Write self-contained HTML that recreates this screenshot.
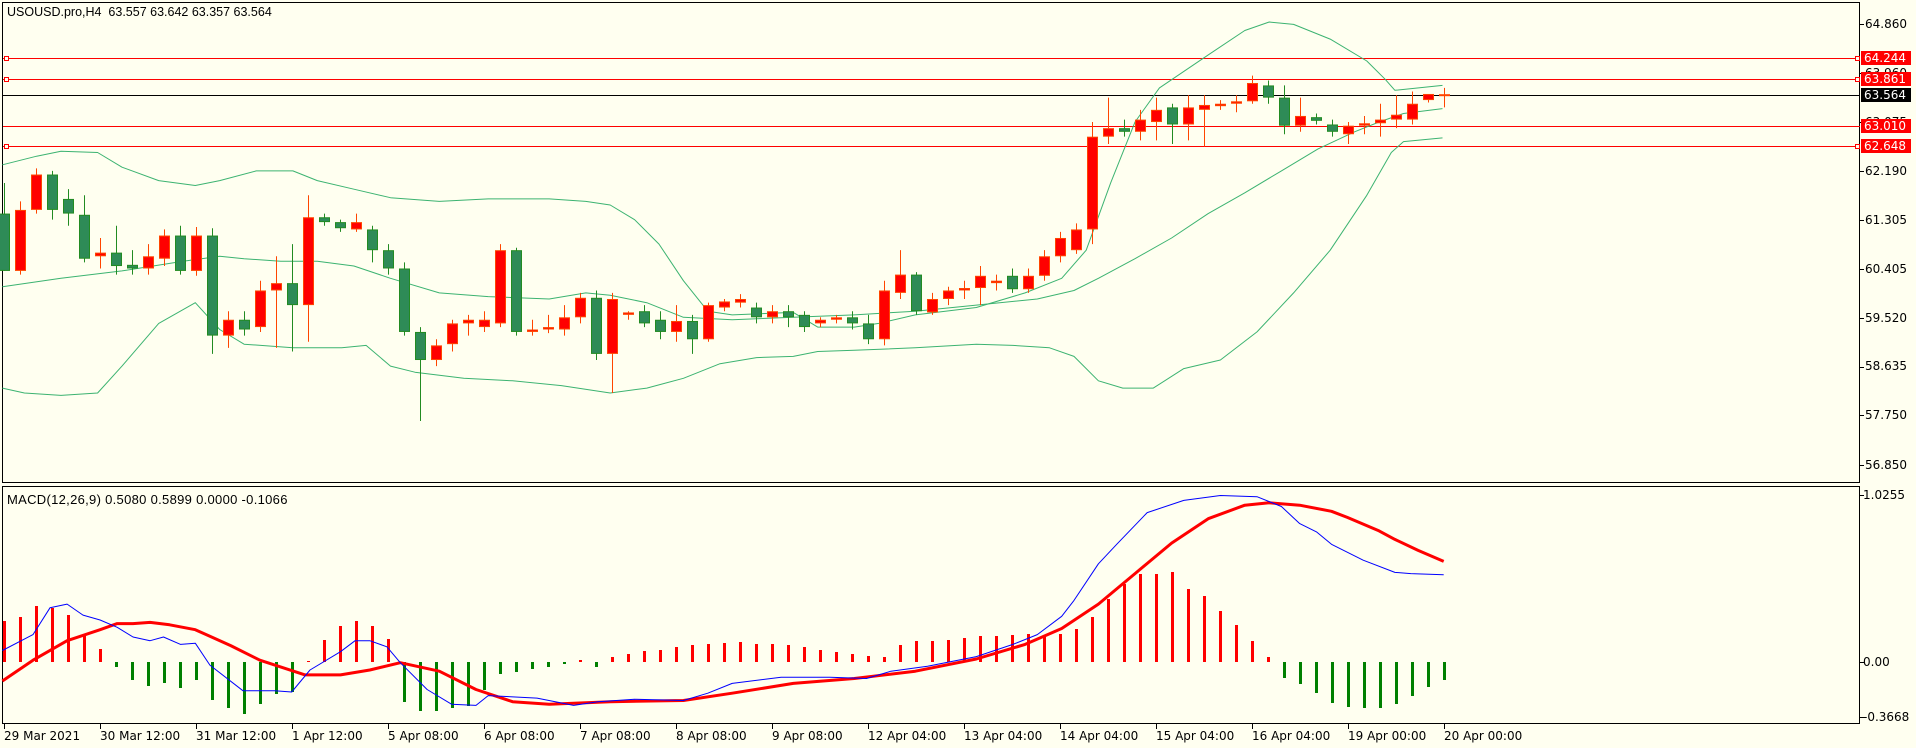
<!DOCTYPE html>
<html><head><meta charset="utf-8">
<style>
html,body{margin:0;padding:0;background:#fffff0;}
body{width:1916px;height:748px;position:relative;overflow:hidden;font-family:"Liberation Sans","DejaVu Sans",sans-serif;font-size:12px;color:#000;}
svg{position:absolute;left:0;top:0;}
.t{position:absolute;white-space:nowrap;line-height:13px;font-size:12.5px;}
.d{position:absolute;white-space:nowrap;line-height:13px;font-size:12px;font-family:"DejaVu Sans",sans-serif;}
.ax{position:absolute;left:1865px;white-space:nowrap;font-size:12px;line-height:13px;font-family:"DejaVu Sans",sans-serif;}
.box{position:absolute;left:1861px;width:50px;height:14px;line-height:14px;color:#fff;font-size:12px;padding-left:3px;box-sizing:border-box;font-family:"DejaVu Sans",sans-serif;}
</style></head><body>
<svg id="c" width="1916" height="748" xmlns="http://www.w3.org/2000/svg"></svg>

<div class="t" style="left:7px;top:6px">USOUSD.pro,H4&nbsp;&nbsp;63.557 63.642 63.357 63.564</div>
<div class="t" style="left:7px;top:493px;font-size:13px;letter-spacing:0.3px">MACD(12,26,9) 0.5080 0.5899 0.0000 -0.1066</div>

<div class="ax" style="top:18px">64.860</div>
<div class="ax" style="top:67px">63.960</div>
<div class="ax" style="top:116px">63.075</div>
<div class="ax" style="top:165px">62.190</div>
<div class="ax" style="top:214px">61.305</div>
<div class="ax" style="top:263px">60.405</div>
<div class="ax" style="top:312px">59.520</div>
<div class="ax" style="top:360px">58.635</div>
<div class="ax" style="top:409px">57.750</div>
<div class="ax" style="top:459px">56.850</div>

<div class="box" style="top:51px;background:#f00">64.244</div>
<div class="box" style="top:72px;background:#f00">63.861</div>
<div class="box" style="top:88px;background:#000">63.564</div>
<div class="box" style="top:119px;background:#f00">63.010</div>
<div class="box" style="top:139px;background:#f00">62.648</div>

<div class="ax" style="top:489px;left:1863px">1.0255</div>
<div class="ax" style="top:656px;left:1863px">0.00</div>
<div class="ax" style="top:711px;left:1863px">-0.3668</div>

<div class="d" style="left:4px;top:730px">29 Mar 2021</div>
<div class="d" style="left:100px;top:730px">30 Mar 12:00</div>
<div class="d" style="left:196px;top:730px">31 Mar 12:00</div>
<div class="d" style="left:292px;top:730px">1 Apr 12:00</div>
<div class="d" style="left:388px;top:730px">5 Apr 08:00</div>
<div class="d" style="left:484px;top:730px">6 Apr 08:00</div>
<div class="d" style="left:580px;top:730px">7 Apr 08:00</div>
<div class="d" style="left:676px;top:730px">8 Apr 08:00</div>
<div class="d" style="left:772px;top:730px">9 Apr 08:00</div>
<div class="d" style="left:868px;top:730px">12 Apr 04:00</div>
<div class="d" style="left:964px;top:730px">13 Apr 04:00</div>
<div class="d" style="left:1060px;top:730px">14 Apr 04:00</div>
<div class="d" style="left:1156px;top:730px">15 Apr 04:00</div>
<div class="d" style="left:1252px;top:730px">16 Apr 04:00</div>
<div class="d" style="left:1348px;top:730px">19 Apr 00:00</div>
<div class="d" style="left:1444px;top:730px">20 Apr 00:00</div>

<script>
var S=1.2204,svg=document.getElementById('c'),h='';
function L(x1,y1,x2,y2,c,w){h+='<line x1="'+x1+'" y1="'+y1+'" x2="'+x2+'" y2="'+y2+'" stroke="'+c+'" stroke-width="'+(w||1)+'"/>';}
function R(x,y,w,hh,f,s){h+='<rect x="'+x+'" y="'+y+'" width="'+w+'" height="'+hh+'" fill="'+f+'"'+(s?' stroke="'+s+'" stroke-width="1"':'')+'/>';}
function P(pts,c,w){var d=pts.map(function(p){return (p[0]*S).toFixed(1)+','+(p[1]*S).toFixed(1)}).join(' ');h+='<polyline points="'+d+'" fill="none" stroke="'+c+'" stroke-width="'+w+'" stroke-linejoin="round"/>';}
h+='<rect x="2.5" y="2.5" width="1857" height="480" fill="none" stroke="#000"/>';
h+='<rect x="2.5" y="486.5" width="1857" height="237" fill="none" stroke="#000"/>';
[24,73,122,171,220,269,318,367,415,465].forEach(function(y){L(1860,y+.5,1864,y+.5,'#000');});
[495,662,717].forEach(function(y){L(1860,y+.5,1864,y+.5,'#000');});
for(var k=0;k<16;k++){var tx=4+96*k+.5;L(tx,724,tx,729,'#000');}
[58,79,126,146].forEach(function(y){L(3,y+.5,1860,y+.5,'#f00');});
L(3,95.5,1860,95.5,'#000');
[58,79,146].forEach(function(y){R(4.5,y-2+.5,4,4,'#fffff0','#f00');R(1855.5,y-2+.5,4,4,'#fffff0','#f00');});
P([[2,135],[30,128],[50,124],[80,125],[100,137],[130,148],[160,152],[180,148],[210,140],[240,140],[260,148],[290,155],[320,162],[360,165],[400,163],[450,163],[480,165],[500,168],[520,180],[540,200],[560,230],[580,255],[600,258],[650,256],[670,268],[700,268],[720,265],[750,258],[800,252],[840,240],[870,228],[890,205],[910,150],[930,100],[950,72],[990,45],[1020,25],[1040,18],[1060,20],[1090,32],[1120,50],[1135,65],[1143,74],[1182,70]],'#3cb371',1);
P([[2,235],[50,228],[100,222],[150,214],[180,210],[200,212],[230,214],[260,214],[290,218],[320,228],[360,240],[400,243],[450,245],[480,240],[500,242],[530,248],[560,260],[600,262],[650,260],[700,258],[750,255],[800,250],[850,245],[880,238],[900,228],[930,212],[960,195],[990,175],[1020,158],[1050,140],[1080,122],[1110,108],[1130,100],[1150,93],[1182,89]],'#3cb371',1);
P([[2,318],[20,322],[50,324],[80,322],[100,300],[130,265],[160,248],[180,270],[200,282],[240,285],[280,285],[300,283],[320,300],[340,305],[380,310],[420,312],[460,316],[500,322],[530,318],[560,310],[590,298],[620,293],[650,292],[670,288],[700,287],[750,285],[800,282],[830,283],[860,285],[880,292],[900,312],[920,318],[945,318],[970,302],[1000,295],[1030,272],[1060,240],[1090,205],[1120,160],[1140,125],[1150,116],[1182,113]],'#3cb371',1);
var C=[[175,222,150,222],[222,172,165,225],[172,143,138,175],[143,172,140,180],[163,175,155,185],[176,212,160,215],[210,207,195,220],[207,218,185,225],[217,220,205,225],[220,210,200,225],[212,193,188,218],[193,222,185,225],[222,193,186,226],[193,275,187,290],[275,262,255,285],[262,270,255,275],[268,238,230,272],[238,232,210,285],[232,250,200,288],[250,178,160,280],[178,182,175,185],[182,187,180,190],[188,182,175,190],[188,205,185,215],[205,220,200,225],[220,272,215,275],[272,295,268,345],[295,283,278,300],[282,265,262,288],[265,262,258,275],[268,262,255,272],[265,205,200,268],[205,272,203,275],[272,270,262,275],[270,268,258,273],[270,260,250,275],[260,244,240,265],[244,290,238,295],[290,245,240,322],[258,256,255,262],[255,265,250,268],[262,272,255,278],[272,263,250,280],[263,278,258,290],[278,250,248,280],[252,247,245,255],[248,245,241,252],[252,260,248,265],[260,255,250,265],[255,260,250,268],[258,268,255,272],[265,262,260,268],[262,260,258,265],[260,265,255,270],[265,278,258,282],[278,238,230,283],[240,225,205,245],[225,255,223,258],[256,245,240,258],[245,238,235,250],[238,236,230,245],[236,226,218,250],[232,230,225,238],[226,237,220,240],[237,226,220,240],[226,210,205,230],[210,195,190,215],[205,188,183,208],[188,112,100,200],[112,105,80,118],[105,108,98,112],[108,98,90,115],[100,90,80,115],[88,102,85,118],[102,88,78,115],[90,86,78,120],[87,85,82,90],[85,83,78,92],[83,68,62,85],[70,80,66,85],[80,103,70,110],[103,95,80,108],[96,99,93,102],[102,108,98,112],[110,103,100,118],[103,101,95,110],[101,98,85,112],[98,94,78,105],[98,85,75,102],[82,77,77,84],[79,78,72,88]];
C.forEach(function(c,i){var x=4+16*i,o=c[0]*S,cl=c[1]*S,hi=c[2]*S,lo=c[3]*S;var up=cl<o;var wc=up?'#ff4500':'#228b22';L(x+.5,hi,x+.5,lo,wc);var t=Math.min(o,cl),b=Math.max(o,cl);if(b-t<2){R(x-5,t-1,11,2,wc);}else{R(x-4.5,t+.5,10,b-t-1,up?'#ff0000':'#2e8b57',wc);}});
var Hh=[41,45,56,54,47,27,13,-5,-18,-24,-21,-26,-18,-38,-46,-52,-42,-32,-30,1,22,36,41,36,23,-40,-49,-49,-46,-44,-28,-12,-10,-7,-5,-2,2,-5,5,8,11,12,15,17,18,19,20,18,18,17,15,12,10,8,6,5,17,21,21,22,24,26,26,27,28,27,28,33,45,63,78,88,88,90,73,66,51,37,21,5,-16,-22,-31,-41,-45,-46,-46,-42,-34,-25,-18];
Hh.forEach(function(v,i){var x=4+16*i-1;if(v>=0)R(x,662-v,3,v,'#f00');else R(x,662,3,-v,'#008000');});
P([[2,558],[27,541],[55,525],[82,516],[96,511],[109,511],[123,510],[139,512],[160,516],[189,529],[213,541],[250,553],[279,553],[303,549],[328,543],[360,550],[390,565],[420,575],[450,577],[500,575],[560,574],[600,568],[650,560],[700,556],[750,550],[800,540],[840,528],[870,515],[900,495],[930,470],[960,445],[990,425],[1020,414],[1040,412],[1065,414],[1091,419],[1104,424],[1130,435],[1143,442],[1162,451],[1183,460]],'#f00',3);
P([[2,533],[27,520],[41,498],[55,495],[68,504],[82,508],[96,514],[109,522],[123,525],[134,522],[148,528],[160,527],[172,545],[199,566],[225,566],[239,567],[254,549],[279,534],[291,525],[303,525],[317,530],[328,543],[350,565],[370,577],[390,578],[400,570],[440,572],[470,578],[490,575],[520,573],[560,574],[580,568],[600,560],[640,555],[680,555],[710,556],[730,550],[760,546],[800,538],[830,528],[850,520],[870,505],[880,492],[900,462],[915,446],[940,420],[970,410],[1000,406],[1030,407],[1050,415],[1065,429],[1079,436],[1091,446],[1117,459],[1143,469],[1156,470],[1183,471]],'#0000ff',1);
svg.innerHTML=h;
</script>
</body></html>
